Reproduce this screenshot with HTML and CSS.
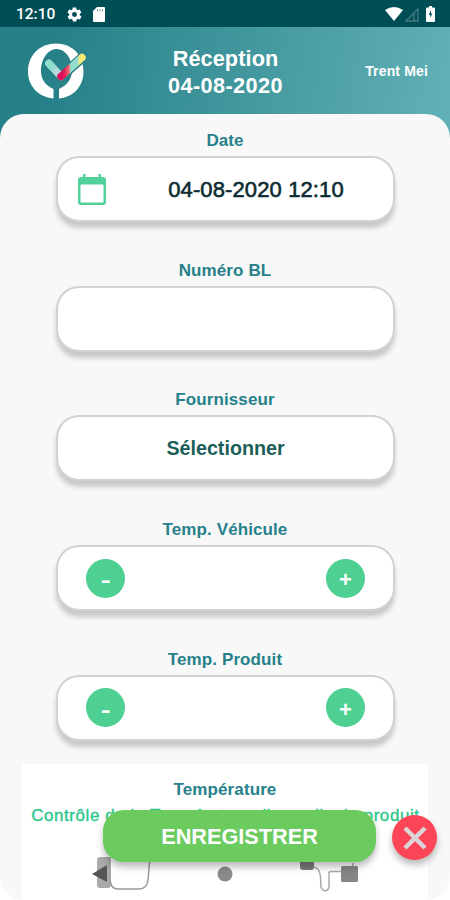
FILE: index.html
```html
<!DOCTYPE html>
<html lang="fr">
<head>
<meta charset="utf-8">
<title>Réception</title>
<link rel="stylesheet" href="styles.css">
</head>
<body>
<div class="screen">
  <div class="status">
    <span class="clock">12:10</span>
    <svg class="gear" viewBox="0 0 24 24" width="17" height="17"><path fill="#fff" d="M19.4 13c0-.3.1-.6.1-1s0-.7-.1-1l2.100-1.600c.2-.2.3-.4.1-.7l-2-3.400c-.1-.2-.4-.3-.6-.2l-2.500 1c-.5-.4-1.100-.7-1.700-1l-.4-2.600c0-.3-.2-.5-.5-.5h-4c-.3 0-.5.2-.5.500l-.4 2.600c-.6.300-1.200.6-1.700 1l-2.500-1c-.2-.1-.5 0-.6.200l-2 3.400c-.1.300-.1.500.1.700L4.600 11c0 .3-.1.600-.1 1s0 .700.1 1l-2.100 1.600c-.2.200-.3.400-.1.700l2 3.400c.1.200.4.300.6.200l2.500-1c.5.400 1.100.700 1.700 1l.4 2.600c0 .300.2.500.5.500h4c.3 0 .5-.2.500-.5l.4-2.600c.6-.3 1.200-.6 1.700-1l2.500 1c.2.100.5 0 .6-.2l2-3.400c.1-.3.100-.5-.1-.7zM12 15.500a3.500 3.500 0 1 1 0-7 3.500 3.500 0 0 1 0 7z"/></svg>
    <svg class="sd" viewBox="0 0 12 15" width="12" height="15"><path fill="#fff" d="M4 0h7q1 0 1 1v13q0 1-1 1H1q-1 0-1-1V4z"/><path stroke="#6f9da1" stroke-width="1" d="M4.500 2v2.500M7 2v2.500M9.500 2v2.500"/></svg>
    <span class="grow"></span>
    <svg class="wifi" viewBox="0 0 18 14" width="18" height="14"><path fill="#fff" d="M0 3Q9-3 18 3L9 14z"/></svg>
    <svg class="signal" viewBox="0 0 14 14" width="14" height="14"><path fill="none" stroke="#45787d" stroke-width="1.300" d="M1 13 13 1v12zM9 5v8"/></svg>
    <svg class="battery" viewBox="0 0 9 16" width="9" height="16"><path fill="#fff" d="M3 0h3v1.500h2q1 0 1 1V15q0 1-1 1H1q-1 0-1-1V2.500q0-1 1-1h2z"/><path fill="#004e55" d="M5 4 2.800 8.700h1.400v3L6.500 7.500H5z"/></svg>
  </div>
  <header class="header">
    <svg class="logo" viewBox="0 0 60 60" width="60" height="60">
      <defs><linearGradient id="tick" x1="35" y1="0" x2="56" y2="0" gradientUnits="userSpaceOnUse"><stop offset="0" stop-color="#dc1058"/><stop offset=".16" stop-color="#e01b5a"/><stop offset=".38" stop-color="#ed6a6b"/><stop offset=".46" stop-color="#91ddd0"/><stop offset=".8" stop-color="#9be0d0"/><stop offset=".88" stop-color="#f4e878"/></linearGradient></defs>
      <path fill="#fff" fill-rule="evenodd" d="M27.500 57.500C11 56 2 44 2 30.500 2 14 14 2.500 30 2.500S57.500 14 57.500 30.500C57.500 44 49 56 33 57.500V48C42 44 46 37 46 29 46 17 39 8 30.500 8S15 18 15 30C15 38 19 44 27.500 48z"/>
      <path stroke="#268087" stroke-width="10" stroke-linecap="round" fill="none" d="M35 35.500 57 16"/>
      <path stroke="#b5d9dc" stroke-width="7.500" stroke-linecap="round" d="m23 22.500 12 13"/><path stroke="#91ddd0" stroke-width="7.500" stroke-linecap="round" d="m23 22.500 3 3.250"/>
      <path stroke="url(#tick)" stroke-width="7.500" stroke-linecap="round" d="m35 35.500 21-19"/>
    </svg>
    <h1 class="title">Réception<br><span class="day">04-08-2020</span></h1>
    <span class="user">Trent Mei</span>
  </header>
  <main class="sheet">
    <section class="field"><h2 class="label">Date</h2><div class="box date-box">
      <svg class="cal" viewBox="0 0 28 31" width="28" height="31"><path fill="#50d29a" fill-rule="evenodd" d="M3 3h2V0h2.500v3h13V0H23v3h2q3 0 3 3v22q0 3-3 3H3q-3 0-3-3V6q0-3 3-3zm-.5 7.500v18h23v-18z"/></svg>
      <span class="date">04-08-2020 12:10</span></div></section>
    <section class="field"><h2 class="label">Numéro BL</h2><div class="box"></div></section>
    <section class="field"><h2 class="label">Fournisseur</h2><div class="box center"><span class="select">Sélectionner</span></div></section>
    <section class="field"><h2 class="label">Temp. Véhicule</h2><div class="box stepper"><span class="round"><span class="minus">-</span></span><span class="round">+</span></div></section>
    <section class="field"><h2 class="label">Temp. Produit</h2><div class="box stepper"><span class="round"><span class="minus">-</span></span><span class="round">+</span></div></section>
    <section class="card"><h2 class="label">Température</h2><p class="hint">Contrôle de la Température d'un colis de produit.</p></section>
  </main>
  <svg class="art" viewBox="0 0 270 45" width="270" height="45">
    <rect x="5" y="2" width="14" height="31" rx="3" fill="#aaa"/>
    <path d="M18 2v21q0 11 8 11h21q8 0 9-9l2-23" fill="#fff" stroke="#999" stroke-width="1.500"/>
    <path d="M0 19 15 10v17z" fill="#555"/>
    <circle cx="133" cy="19" r="7.500" fill="#8b8b8b"/>
    <path d="M221 12c10 1 7 16 8 20 2 5 7 5 8 0V18q0-1.500 2-1.500h14q8 0 8-8.500" fill="none" stroke="#aaa" stroke-width="1.500"/>
    <rect x="208" y="0" width="14" height="15" rx="3" fill="#7b7b7b"/><rect x="249" y="11" width="17" height="16" rx="1.500" fill="#858585"/>
  </svg>
  <button class="save"><span>ENREGISTRER</span></button>
  <button class="close" aria-label="Fermer"><svg viewBox="0 0 24 24" width="24" height="24"><path d="m2 2 20 20M22 2 2 22" stroke="#dbd4d8" stroke-width="4.500"/></svg></button>
</div>
</body>
</html>
```
FILE: styles.css
```css
* { box-sizing: border-box; }
body { margin: 0; font-family: "Liberation Sans", sans-serif; }
.screen { position: relative; width: 450px; height: 900px; overflow: hidden; background: linear-gradient(100deg, #268087 12%, #62b1b7 100%) 0 27px / 450px 120px no-repeat, #fff; display: flex; flex-direction: column; }
.status { height: 27px; flex: none; background: #004e55; display: flex; align-items: center; padding: 1px 15px 0 16px; color: #fff; }
.clock { font: 500 15.500px Roboto, sans-serif; width: 40px; white-space: nowrap; }
.gear { margin-left: 10px; }
.sd { margin-left: 10px; }
.grow { flex: 1; }
.signal { margin: 2px 7px 0 2px; }
.header { height: 87px; flex: none; display: grid; grid-template-columns: 110px 230px 110px; align-items: center; color: #fff; }
.logo { margin-left: 26px; }
.title { margin: 0; padding: 2px 0 0 1px; font-size: 21.700px; line-height: 27px; text-align: center; font-weight: 700; letter-spacing: .1px; }
.day { letter-spacing: .4px; }
.user { font-size: 14px; font-weight: 700; letter-spacing: .15px; justify-self: end; margin-right: 22px; white-space: nowrap; }
.sheet { flex: 1; min-height: 0; overflow: hidden; border-radius: 24px; background: #f8f8f8; padding: 16px 22px 0; }
.field { height: 129.700px; padding: 0 34px; }
.label { margin: 0; height: 26px; line-height: 22px; font-size: 17px; font-weight: 700; letter-spacing: .1px; color: #26818a; text-align: center; white-space: nowrap; }
.box { height: 66px; width: 339px; border: 2px solid #d2d2d2; border-radius: 23px; background: #fff; box-shadow: 0 6px 5px #c8c8c8; display: flex; align-items: center; }
.date-box { padding-left: 20px; }
.date { flex: 1; text-align: center; font-size: 22px; letter-spacing: .12px; color: #0d2c32; -webkit-text-stroke: .6px #0d2c32; padding: 2px 0 0 13px; }
.center { justify-content: center; }
.select { font-size: 19.700px; font-weight: 700; color: #1c5f59; }
.stepper { justify-content: space-between; padding: 0 28px; }
.round { width: 39px; height: 39px; border-radius: 50%; background: #4dd092; color: #fff; display: flex; align-items: center; justify-content: center; font-size: 22px; font-weight: 700; padding-top: 4px; }
.minus { transform: scaleX(1.35); }
.card { height: 140px; background: #fff; padding-top: 15px; margin-top: -14px; }
.hint { margin: 0 -10px; padding-left: 6px; color: #2fc78d; font-size: 17px; letter-spacing: .57px; line-height: 21px; white-space: nowrap; text-align: center; -webkit-text-stroke: .4px #2fc78d; }
.art { position: absolute; left: 92px; top: 855px; }
button { border: 0; padding: 0; display: flex; align-items: center; justify-content: center; }
.save { position: absolute; left: 103px; top: 810px; width: 273px; height: 52px; border-radius: 21px; background: #6bcb5f; color: #fff; font: 700 21.700px "Liberation Sans", sans-serif; padding-top: 1px; box-shadow: 0 5px 7px #0004; }
.close { position: absolute; left: 392px; top: 815px; width: 45px; height: 45px; border-radius: 50%; background: #fc4557; box-shadow: 0 5px 7px #0004; }
```
